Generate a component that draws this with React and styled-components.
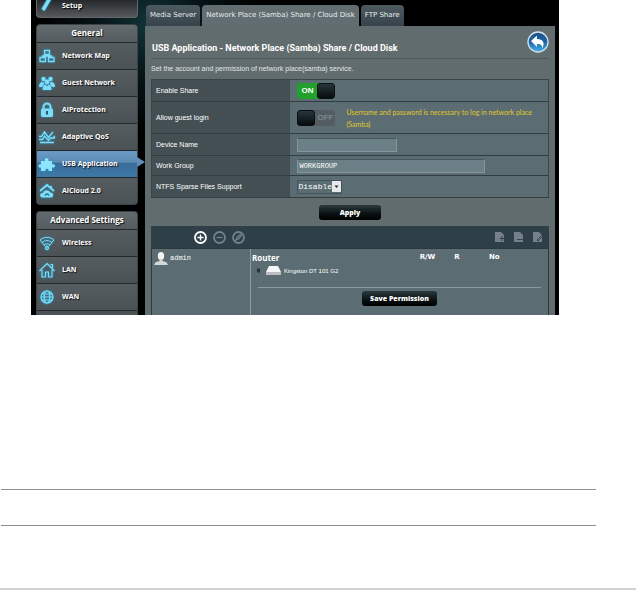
import React, { useState } from "react";
import styled, { createGlobalStyle } from "styled-components";

const GlobalStyle = createGlobalStyle`
  * {
    box-sizing: border-box;
  }
  body {
    margin: 0;
    background: #fff;
    font-family: "Liberation Sans", Arial, sans-serif;
    font-size: 7px;
    color: #fff;
  }
  a {
    color: inherit;
    text-decoration: none;
  }
  button, input, select {
    margin: 0;
    padding: 0;
    border: 0;
    font-family: inherit;
    color: inherit;
  }
  svg {
    display: block;
    flex: none;
  }
`;

const Screen = styled.div`
  display: flex;
  gap: 7px;
  margin: 0 77px 0 31px;
  padding: 0 4px 0 5px;
  overflow: hidden;
  background: radial-gradient(circle at 118px 24px, #12343a 0, #071518 50px, #000 110px);
`;

const Sidebar = styled.nav`
  width: 102px;
  flex: none;
  display: flex;
  flex-direction: column;
  gap: 6px;
`;

const SetupLink = styled.a`
  display: flex;
  align-items: flex-start;
  gap: 7px;
  height: 18px;
  padding: 0 2px;
  border: 1px solid #64686a;
  border-top: 0;
  border-radius: 0 0 4px 4px;
  background: linear-gradient(#26292b, #55595b);
  font: bold 7px/11px "Open Sans", sans-serif;
  text-shadow: 1px 1px 1px #000;
`;

const Menu = styled.div`
  border: 1px solid #3c4346;
  border-bottom-width: ${(p) => (p.$cut ? "0" : "1px")};
  border-radius: ${(p) => (p.$cut ? "4px 4px 0 0" : "4px")};
  background: #4c5356;
  font: bold 7px/10px "Open Sans", sans-serif;
  text-shadow: 1px 1px 1px #111;

  h2 {
    margin: 0;
    height: 17px;
    border-radius: 3px 3px 0 0;
    background: linear-gradient(#646b6e, #555c5f);
    font-size: 8px;
    line-height: 16px;
    text-align: center;
  }
`;

const MenuItem = styled.a`
  position: relative;
  display: flex;
  align-items: center;
  gap: 7px;
  height: 27px;
  padding: 0 2px 1px;
  border-top: 1px solid #24282a;
  background: ${(p) =>
    p.$active
      ? "linear-gradient(#6a9bc4 0, #5d8cb6 42%, #3a6c9a 48%, #3d7aa8 100%)"
      : "linear-gradient(#565d60, #4b5255)"};

  /* pointer towards the content panel */
  &::after {
    content: "";
    display: ${(p) => (p.$active ? "block" : "none")};
    position: absolute;
    right: -8px;
    top: 6px;
    border: 5px solid transparent;
    border-left: 8px solid #5f8fb8;
    border-right: 0;
  }
`;

const MenuEdge = styled.div`
  height: 5px;
  border-top: 1px solid #24282a;
`;

const IconBox = styled.svg`
  width: 16px;
  height: 16px;
  overflow: visible;
  fill: none;
  stroke: #7edcf6;
  stroke-width: 1.3;
  filter: drop-shadow(0 0 1px #1b9ccf);
`;

const Main = styled.main`
  flex: 1;
  min-width: 0;
  display: flex;
  flex-direction: column;
  padding-top: 5px;
`;

const Tabs = styled.div`
  display: flex;
  gap: 2px;
  padding-left: 1px;
`;

const Tab = styled.a`
  height: 21px;
  padding: 0 4px;
  border-radius: 4px 4px 0 0;
  background: ${(p) => (p.$active ? "#616d70" : "linear-gradient(#4d5a60, #36434a)")};
  font: 7px/21px "DejaVu Sans", sans-serif;
  color: #e8ecee;
  white-space: nowrap;
`;

const Panel = styled.div`
  flex: 1;
  padding: 0 6px;
  background: #616c6e;
`;

const Heading = styled.div`
  display: flex;
  align-items: center;
  justify-content: space-between;
  height: 33px;
  border-bottom: 1px solid #4c5b60;

  h1 {
    margin: 0;
    padding: 12px 0 0 1px;
    font: bold 9px/12px Roboto, sans-serif;
    white-space: nowrap;
  }
`;

const BackButton = styled.button`
  width: 22px;
  height: 22px;
  background: none;
`;

const Intro = styled.p`
  margin: 0;
  height: 20px;
  line-height: 20px;
  color: #e2e6e7;
`;

const SettingsTable = styled.table`
  width: 100%;
  border-collapse: collapse;
  border: 1px solid #37464c;

  th {
    width: 35%;
    padding: 0 4px;
    background: #444f54;
    font-weight: normal;
    text-align: left;
  }
  td {
    padding: 0 7px;
    background: #5b6d72;
  }
  th, td {
    border-bottom: 1px solid #303e44;
  }
`;

const Row = styled.tr`
  height: ${(p) => p.$height || 22}px;
`;

const Inline = styled.div`
  display: flex;
  align-items: center;
  gap: 11px;
`;

const Hint = styled.span`
  color: #e0c72a;
  font: 7px/12px Lato, sans-serif;
`;

const Switch = styled.label`
  display: flex;
  flex: none;
  flex-direction: ${(p) => (p.$on ? "row" : "row-reverse")};
  width: 38px;
  height: 16px;
  border-radius: 3px;
  overflow: hidden;
  background: ${(p) => (p.$on ? "#22a02c" : "#535d61")};
  color: ${(p) => (p.$on ? "#fff" : "#8f999c")};
  font: ${(p) => (p.$on ? "bold" : "normal")} 8px/16px "Liberation Sans", sans-serif;

  input {
    appearance: none;
    width: 0;
    height: 0;
  }
  span {
    flex: 1;
    text-align: center;
  }
  i {
    width: 18px;
    border-radius: 3px;
    border: 1px solid #0a1113;
    background: linear-gradient(#27353a, #070c0e);
  }
`;

const TextField = styled.input`
  display: block;
  width: ${(p) => (p.$wide ? "77%" : "41%")};
  height: 14px;
  padding: 0 1px;
  border: 1px solid #86969a;
  border-top-color: #45565c;
  background: #6b8086;
  font: 7px "Liberation Mono", monospace;
`;

const SelectBox = styled.div`
  display: flex;
  align-items: center;
  position: relative;
  width: 45px;

  select {
    appearance: none;
    width: 100%;
    height: 14px;
    border: 1px solid #43545a;
    border-radius: 0;
    background: #5b6d72;
    font: 8px "Liberation Mono", monospace;
  }
  svg {
    position: absolute;
    right: 1px;
    pointer-events: none;
  }
`;

const DarkButton = styled.button`
  display: block;
  min-width: 62px;
  height: 15px;
  margin: 0 auto;
  padding: 0 8px;
  border-radius: 3px;
  background: linear-gradient(#2b3a3e, #0a1012 60%, #000);
  font: 800 7px/15px "Open Sans", sans-serif;
  white-space: nowrap;
`;

const Actions = styled.div`
  padding: 7px 0 6px;
`;

const Toolbar = styled.div`
  display: flex;
  align-items: center;
  justify-content: space-between;
  height: 22px;
  padding: 0 5px 0 43px;
  background: #2f3f47;
`;

const IconRow = styled.div`
  display: flex;
  gap: ${(p) => p.$gap}px;

  button {
    background: none;
  }
`;

const Shares = styled.div`
  display: flex;
  min-height: 67px;
  border: 1px solid #2c3a40;
  border-bottom: 0;
  background: #5b6d72;
`;

const Users = styled.div`
  width: 25%;
  flex: none;
  display: flex;
  align-items: flex-start;
  gap: 2px;
  padding: 3px 2px;
  border-right: 1px solid #8c9a9d;
  font: 7px/12px "Liberation Mono", monospace;
`;

const Permissions = styled.div`
  flex: 1;
  padding: 2px 7px 0 1px;
`;

const PermissionTable = styled.table`
  width: 100%;
  border-collapse: collapse;
  table-layout: fixed;

  th, td {
    padding: 0;
    text-align: left;
  }
  th {
    width: 12%;
    height: 13px;
    font: bold 7px/13px "DejaVu Sans", sans-serif;
  }
  th:first-child {
    width: 58%;
    font: bold 8px/13px "Open Sans", sans-serif;
  }
  th:last-child {
    width: 18%;
  }
  td {
    height: 13px;
  }
`;

const Device = styled.div`
  display: flex;
  align-items: center;
  gap: 3px;
  padding-left: 4px;
  font-size: 6px;
`;

const Footer = styled.div`
  margin: 10px 0 0 6px;
  padding-top: 3px;
  border-top: 1px solid #8c9a9d;
`;

const Rules = styled.div`
  margin: 174px 40px 0 1px;
  height: 37px;
  border: 1px solid #8f8f8f;
  border-width: 1px 0;
`;

const PageEnd = styled.hr`
  margin: 62px 0 0;
  border: 0;
  border-top: 2px solid #d3d3d3;
`;

const icons = {
  wand: <path d="M4 10 L11 -2" strokeWidth="3.500" />,
  map: <path d="M5.500 2.500h5v4h-5zM1 9.500h5.500v4H1zM9.500 9.500H15v4H9.500zM8 6.500V8M3.500 9.500V8h9v1.500" />,
  guests: (
    <g fill="#7edcf6" stroke="none">
      <circle cx="4.500" cy="4" r="2.200" />
      <circle cx="11.500" cy="4" r="2.200" />
      <circle cx="8" cy="7" r="2.400" />
      <path d="M0 12c0-4 2-5.500 4.500-5L5 9.500l-2 2.500zM16 12c0-4-2-5.500-4.500-5L11 9.500l2 2.500zM3.500 15c0-3.500 1.500-5.500 3-5.500L8 11.500l1.500-2c1.500 0 3 2 3 5.500z" />
    </g>
  ),
  lock: (
    <g>
      <path d="M4.500 7V5a3.500 3.500 0 0 1 7 0v2" strokeWidth="2" />
      <rect x="2" y="6.500" width="12" height="8.500" rx="1.500" fill="#7edcf6" stroke="none" />
      <path d="M8 9v3.500" stroke="#285869" strokeWidth="2" />
    </g>
  ),
  qos: <path d="M0 7.500h2.500L5.500 3l4 5.500L14 3M14.500 7.500H16M0 10.500h3.500L5.500 7l4 4.500 2-2.500H16M1 13.500h14" />,
  puzzle: (
    <path
      d="M2 5h4c-1.500-4 4.500-4 3.500 0H13v3.500c4-1.500 4 4 0 3V15H9.500c1-3-4-3-3 0H2v-3.500c-3.500 1-3.500-4 0-3z"
      fill="#8ee4fb"
      stroke="none"
    />
  ),
  cloud: (
    <g>
      <path d="M1 8l7-6 7 6M12 3v3" strokeWidth="1.800" />
      <path d="M3 14.500c-3-1-2-5 1-4.500C5 6.500 10 6.500 11 9.500c4-.5 4 5 1 5z" fill="#7edcf6" stroke="none" />
      <path d="M6 12.500c1-2 3-2 4 0" stroke="#35677a" />
    </g>
  ),
  wifi: (
    <g>
      <path d="M1 5c4-3.500 10-3.500 14 0M3 7.500c3-2.500 7-2.500 10 0M5 10c2-1.500 4-1.500 6 0M1 5l5 6M15 5l-5 6" strokeWidth="1" />
      <circle cx="8" cy="13" r="1.500" />
    </g>
  ),
  home: <path d="M.5 9L8 1.500 15.500 9M11.500 2.500h2V6M3 8v7h3.500v-5h3v5H13V8" strokeWidth="1.200" />,
  globe: (
    <g strokeWidth="1.200">
      <circle cx="8" cy="8" r="6" />
      <ellipse cx="8" cy="8" rx="2.800" ry="6" />
      <path d="M2 8h12M3 5h10M3 11h10" />
    </g>
  ),
};

const generalItems = [
  { title: "Network Map", icon: "map" },
  { title: "Guest Network", icon: "guests" },
  { title: "AiProtection", icon: "lock" },
  { title: "Adaptive QoS", icon: "qos" },
  { title: "USB Application", icon: "puzzle", active: true },
  { title: "AiCloud 2.0", icon: "cloud" },
];

const advancedItems = [
  { title: "Wireless", icon: "wifi" },
  { title: "LAN", icon: "home" },
  { title: "WAN", icon: "globe" },
];

const tabs = ["Media Server", "Network Place (Samba) Share / Cloud Disk", "FTP Share"];

const circleIcons = [
  { label: "Add account", color: "#fff", d: "M3.500 6.500h6M6.500 3.500v6" },
  { label: "Delete account", color: "#74818a", d: "M3.500 6.500h6" },
  { label: "Edit account", color: "#74818a", d: "M4 9l1-2.500L8.500 3.500 9.500 4.500 6.500 8z" },
];

const folderIcons = [
  { label: "Add folder", d: "M8 5v5M5.500 7.500h5" },
  { label: "Delete folder", d: "M4 8.500h7" },
  { label: "Rename folder", d: "M5 9l5-5 1 1-5 5z" },
];

const Icon = ({ name }) => (
  <IconBox viewBox="0 0 16 16" aria-hidden="true">
    {icons[name]}
  </IconBox>
);

const MenuCard = ({ title, items, cut }) => (
  <Menu $cut={cut}>
    <h2>{title}</h2>
    {items.map((i) => (
      <MenuItem href="#" key={i.title} $active={i.active}>
        <Icon name={i.icon} />
        <span>{i.title}</span>
      </MenuItem>
    ))}
    {cut && <MenuEdge />}
  </Menu>
);

const Toggle = ({ id, on, onChange }) => (
  <Switch $on={on}>
    <input id={id} type="checkbox" checked={on} onChange={() => onChange(!on)} />
    <span>{on ? "ON" : "OFF"}</span>
    <i />
  </Switch>
);

const App = () => {
  const [share, setShare] = useState(true);
  const [guest, setGuest] = useState(false);

  return (
    <>
      <GlobalStyle />
      <Screen>
        <Sidebar>
          <SetupLink href="#">
            <Icon name="wand" />
            <span>Setup</span>
          </SetupLink>
          <MenuCard title="General" items={generalItems} />
          <MenuCard title="Advanced Settings" items={advancedItems} cut />
        </Sidebar>
        <Main>
          <Tabs>
            {tabs.map((t, ind) => (
              <Tab href="#" key={t} $active={ind === 1}>
                {t}
              </Tab>
            ))}
          </Tabs>
          <Panel>
            <Heading>
              <h1>USB Application - Network Place (Samba) Share / Cloud Disk</h1>
              <BackButton aria-label="Back">
                <svg width="22" height="22" viewBox="0 0 22 22">
                  <defs>
                    <linearGradient id="ball" x2="0" y2="1">
                      <stop offset="0" stopColor="#1d4f86" />
                      <stop offset=".5" stopColor="#1c66a8" />
                      <stop offset="1" stopColor="#45b4ea" />
                    </linearGradient>
                  </defs>
                  <circle cx="11" cy="11" r="10" fill="url(#ball)" stroke="#d5e3ec" strokeWidth="1.300" />
                  <path d="M4 10L10 4.500V8c6 0 8.500 4 5 9.500.5-4-2-4.500-5-4.500v3z" fill="#fff" />
                </svg>
              </BackButton>
            </Heading>
            <Intro>Set the account and permission of network place(samba) service.</Intro>
            <SettingsTable>
              <tbody>
                <Row>
                  <th><label htmlFor="share">Enable Share</label></th>
                  <td><Toggle id="share" on={share} onChange={setShare} /></td>
                </Row>
                <Row $height={32}>
                  <th><label htmlFor="guest">Allow guest login</label></th>
                  <td>
                    <Inline>
                      <Toggle id="guest" on={guest} onChange={setGuest} />
                      <Hint>
                        Username and password is necessary to log in network place
                        <br />
                        (Samba)
                      </Hint>
                    </Inline>
                  </td>
                </Row>
                <Row>
                  <th><label htmlFor="device">Device Name</label></th>
                  <td><TextField id="device" /></td>
                </Row>
                <Row $height={20}>
                  <th><label htmlFor="group">Work Group</label></th>
                  <td><TextField id="group" $wide defaultValue="WORKGROUP" /></td>
                </Row>
                <Row>
                  <th><label htmlFor="ntfs">NTFS Sparse Files Support</label></th>
                  <td>
                    <SelectBox>
                      <select id="ntfs">
                        <option>Disable</option>
                        <option>Enable</option>
                      </select>
                      <svg width="9" height="11" viewBox="0 0 9 11">
                        <path d="M0 0h9v11H0z" fill="#e6e9ea" />
                        <path d="M2.500 4.500h4L4.500 7z" fill="#222" />
                      </svg>
                    </SelectBox>
                  </td>
                </Row>
              </tbody>
            </SettingsTable>
            <Actions>
              <DarkButton>Apply</DarkButton>
            </Actions>
            <Toolbar>
              <IconRow $gap={6}>
                {circleIcons.map((i) => (
                  <button key={i.label} aria-label={i.label}>
                    <svg width="13" height="13" viewBox="0 0 13 13" fill="none" stroke={i.color}>
                      <circle cx="6.500" cy="6.500" r="5.500" strokeWidth="1.800" />
                      <path d={i.d} strokeWidth="1.300" />
                    </svg>
                  </button>
                ))}
              </IconRow>
              <IconRow $gap={7}>
                {folderIcons.map((i) => (
                  <button key={i.label} aria-label={i.label}>
                    <svg width="12" height="12" viewBox="0 0 12 12">
                      <path d="M1 1h6l3 3v7H1z" fill="#74818a" />
                      <path d={i.d} fill="none" stroke="#35454d" />
                    </svg>
                  </button>
                ))}
              </IconRow>
            </Toolbar>
            <Shares>
              <Users>
                <svg width="14" height="13" viewBox="0 0 14 13" fill="#f1f2f2">
                  <ellipse cx="7" cy="4" rx="3.200" ry="4" />
                  <path d="M5.500 7h3v2l4 1.200L14 13H0l1.500-2.800 4-1.200z" fill="#d3d6d6" />
                </svg>
                <span>admin</span>
              </Users>
              <Permissions>
                <PermissionTable>
                  <thead>
                    <tr>
                      <th>Router</th>
                      <th>R/W</th>
                      <th>R</th>
                      <th>No</th>
                    </tr>
                  </thead>
                  <tbody>
                    <tr>
                      <td colSpan="4">
                        <Device>
                          <svg width="25" height="11" viewBox="0 0 25 11">
                            <path d="M1 3.500h3v4H1z" fill="#27363c" />
                            <path d="M13 1h9l3 6H10z" fill="#f5f6f6" />
                            <path d="M10 7h15v3H10z" fill="#b9bfc1" />
                          </svg>
                          <span>Kingston DT 101 G2</span>
                        </Device>
                      </td>
                    </tr>
                  </tbody>
                </PermissionTable>
                <Footer>
                  <DarkButton>Save Permission</DarkButton>
                </Footer>
              </Permissions>
            </Shares>
          </Panel>
        </Main>
      </Screen>
      <Rules />
      <PageEnd />
    </>
  );
};

export default App;
